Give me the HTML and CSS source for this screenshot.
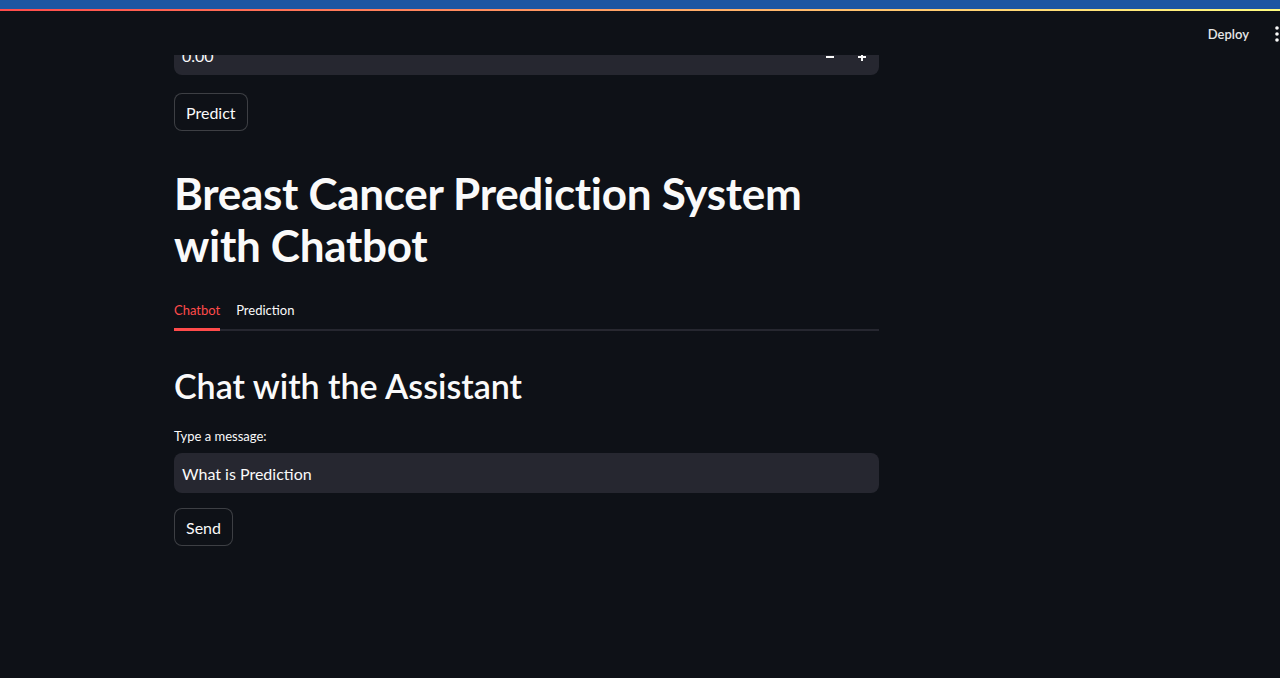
FILE: index.html
```html
<!DOCTYPE html>
<html lang="en">
<head>
<meta charset="utf-8">
<title>Breast Cancer Prediction System</title>
<link rel="stylesheet" href="styles.css">
</head>
<body>
<header class="app-header">
  <div class="band"></div>
  <div class="decoration"></div>
  <div class="toolbar">
    <span class="deploy">Deploy</span>
    <svg class="menu" width="6" height="18" viewBox="0 0 6 18"><circle cx="3" cy="3" r="1.8" fill="#fafafa"/><circle cx="3" cy="9" r="1.8" fill="#fafafa"/><circle cx="3" cy="15" r="1.8" fill="#fafafa"/></svg>
  </div>
</header>
<main class="block">
  <div class="number-input">
    <span class="num-value">0.00</span>
    <div class="steppers">
      <svg class="step" width="10" height="10" viewBox="0 0 10 10"><path d="M1 5h8" stroke="#fafafa" stroke-width="2"/></svg>
      <svg class="step" width="10" height="10" viewBox="0 0 10 10"><path d="M1 5h8M5 1v8" stroke="#fafafa" stroke-width="2"/></svg>
    </div>
  </div>
  <button class="btn">Predict</button>
  <h1 class="title">Breast Cancer Prediction System with Chatbot</h1>
  <div class="tabs">
    <span class="tab active">Chatbot</span>
    <span class="tab">Prediction</span>
  </div>
  <h2 class="subtitle">Chat with the Assistant</h2>
  <label class="label">Type a message:</label>
  <div class="text-input">What is Prediction</div>
  <button class="btn send">Send</button>
</main>
</body>
</html>
```
FILE: styles.css
```css
* { box-sizing: border-box; }
html, body { margin: 0; padding: 0; }
body {
  background: #0e1117;
  color: #fafafa;
  font-family: Lato, "Noto Sans", sans-serif;
  width: 1280px;
  height: 678px;
  overflow: hidden;
}
.app-header {
  position: fixed;
  top: 0; left: 0; right: 0;
  height: 55px;
  background: #0e1117;
  z-index: 10;
}
.band { height: 9px; background: #1c56a2; }
.decoration { height: 2px; background: linear-gradient(90deg, #ff4b4b, #fffd80); }
.toolbar {
  display: flex;
  justify-content: flex-end;
  align-items: center;
  gap: 25px;
  height: 45px;
  margin-right: 0;
}
.deploy { font-size: 13px; font-weight: 600; color: #e6e6e6; }
.menu { display: block; }
.block {
  width: 705px;
  margin-left: 174px;
  padding-top: 35px;
  display: flex;
  flex-direction: column;
  align-items: flex-start;
}
.number-input {
  width: 100%;
  height: 40px;
  background: #262730;
  border-radius: 8px;
  display: flex;
  align-items: center;
  justify-content: space-between;
  padding: 0 8px;
  font-size: 16px;
}
.steppers { display: flex; gap: 22px; padding: 4px 4px 0 0; }
.step { display: block; }
.btn {
  margin-top: 18px;
  height: 38px;
  padding: 0 11px;
  background: #0e1117;
  color: #fafafa;
  border: 1px solid rgba(250,250,250,0.2);
  border-radius: 8px;
  font-family: inherit;
  font-size: 16px;
}
.title {
  margin: 36px 0 0;
  font-size: 44px;
  font-weight: 700;
  line-height: 52px;
  letter-spacing: -0.3px;
  width: 660px;
}
.tabs {
  margin-top: 29px;
  width: 100%;
  display: flex;
  gap: 16px;
  border-bottom: 2px solid #262730;
  font-size: 13px;
}
.tab { padding: 2px 0 10px; margin-bottom: -2px; border-bottom: 3px solid transparent; }
.tab.active { color: #ff4b4b; border-bottom-color: #ff4b4b; }
.subtitle {
  margin: 34px 0 0;
  font-size: 34px;
  font-weight: 600;
  line-height: 42px;
}
.label { margin-top: 19px; font-size: 13px; line-height: 20px; }
.text-input {
  margin-top: 7px;
  width: 100%;
  height: 40px;
  background: #262730;
  border-radius: 8px;
  display: flex;
  align-items: center;
  padding: 0 8px;
  font-size: 16px;
}
.btn.send { margin-top: 15px; }
```
